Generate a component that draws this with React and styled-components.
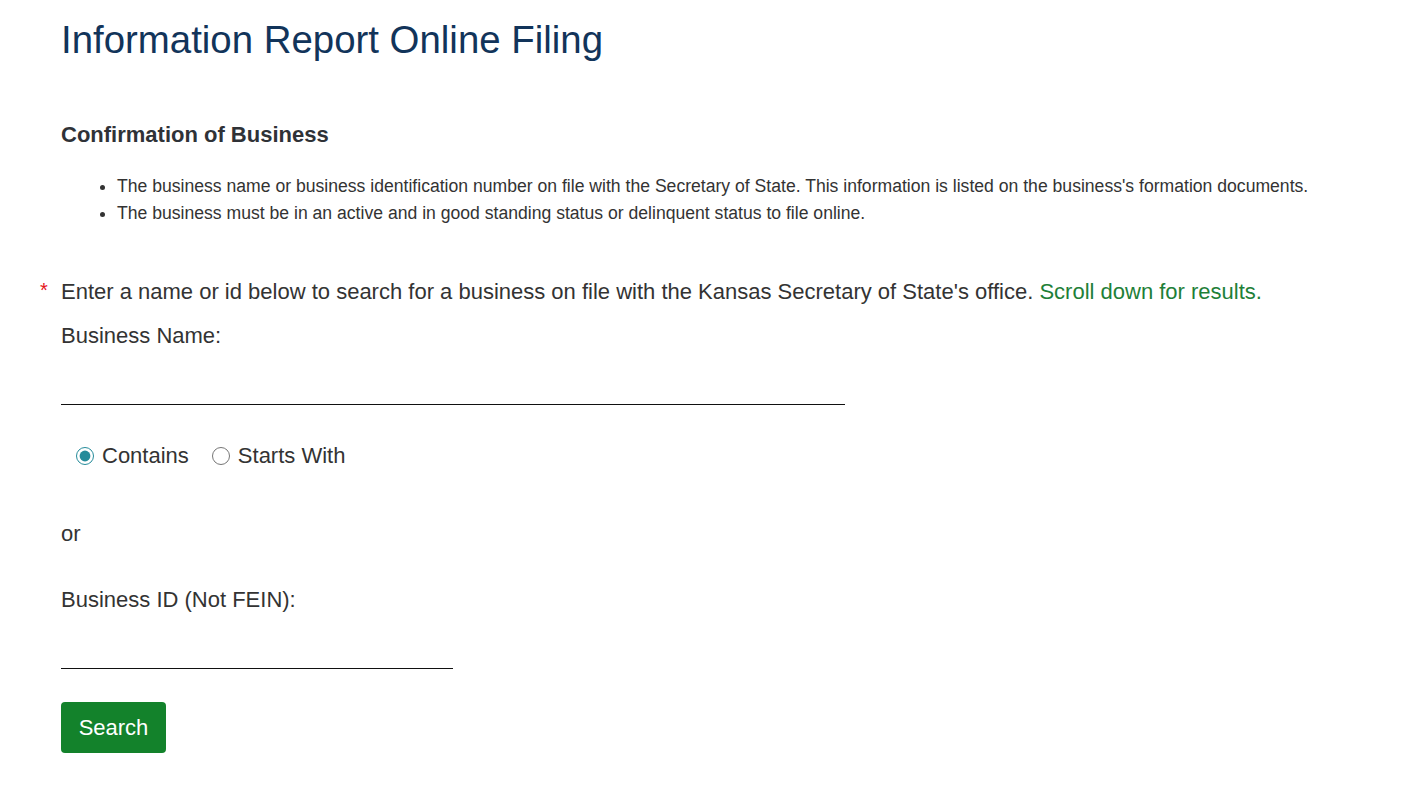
import React, { useState } from 'react';
import styled, { createGlobalStyle } from 'styled-components';

const GlobalStyle = createGlobalStyle`
	body {
		margin: 0;
		background: #fff;
		font-family: "Liberation Sans", Arial, sans-serif;
		color: #333;
	}
`;

const Page = styled.div`
	padding: 18px 0 30px 61px;
`;

const Title = styled.h1`
	margin: 0;
	font-size: 38.4px;
	font-weight: 400;
	line-height: 44px;
	color: #12345a;
`;

const SubTitle = styled.h2`
	margin: 61px 0 0;
	font-size: 22px;
	font-weight: 700;
	line-height: 24px;
	color: #2f3237;
`;

const Bullets = styled.ul`
	margin: 26px 0 0;
	padding-left: 56px;
	font-size: 17.6px;
	line-height: 27px;
	color: #333;
`;

const Prompt = styled.p`
	position: relative;
	margin: 51px 0 0;
	font-size: 22px;
	line-height: 28px;
	color: #333;
`;

const Required = styled.span`
	position: absolute;
	left: -21px;
	top: -2px;
	color: #e4141b;
	font-size: 20px;
`;

const Hint = styled.span`
	color: #1e8038;
`;

const Label = styled.label`
	display: block;
	margin-top: ${props => props.gap || 16}px;
	font-size: 22px;
	line-height: 28px;
	color: #333;
`;

const Input = styled.input`
	display: block;
	width: ${props => props.width}px;
	box-sizing: border-box;
	margin-top: 14px;
	border: none;
	border-bottom: 1px solid #111;
	padding: 4px 0;
	height: 41px;
	font-size: 22px;
	font-family: inherit;
	outline: none;
	background: transparent;
`;

const RadioRow = styled.div`
	display: flex;
	align-items: center;
	gap: 23px;
	margin-top: 37px;
	padding-left: 15px;
`;

const RadioOption = styled.label`
	display: flex;
	align-items: center;
	gap: 8px;
	font-size: 22px;
	line-height: 28px;
	color: #333;
	cursor: pointer;
`;

const Radio = styled.input`
	margin: 0;
	width: 18px;
	height: 18px;
	accent-color: #258b9a;
`;

const Or = styled.div`
	margin-top: 50px;
	font-size: 22px;
	line-height: 28px;
	color: #333;
`;

const Button = styled.button`
	display: block;
	margin-top: 33px;
	width: 105px;
	height: 51px;
	border: none;
	border-radius: 4px;
	background: #13822b;
	color: #fff;
	font-size: 22px;
	font-family: inherit;
	cursor: pointer;
`;

const App = () => {
	const [mode, setMode] = useState('contains');
	return (
		<>
			<GlobalStyle />
			<Page>
				<Title>Information Report Online Filing</Title>
				<SubTitle>Confirmation of Business</SubTitle>
				<Bullets>
					<li>The business name or business identification number on file with the Secretary of State. This information is listed on the business's formation documents.</li>
					<li>The business must be in an active and in good standing status or delinquent status to file online.</li>
				</Bullets>
				<Prompt>
					<Required>*</Required>
					Enter a name or id below to search for a business on file with the Kansas Secretary of State's office. <Hint>Scroll down for results.</Hint>
				</Prompt>
				<Label gap={16}>Business Name:</Label>
				<Input width={784} />
				<RadioRow>
					<RadioOption>
						<Radio type="radio" name="mode" checked={mode === 'contains'} onChange={() => setMode('contains')} />
						Contains
					</RadioOption>
					<RadioOption>
						<Radio type="radio" name="mode" checked={mode === 'starts'} onChange={() => setMode('starts')} />
						Starts With
					</RadioOption>
				</RadioRow>
				<Or>or</Or>
				<Label gap={38}>Business ID (Not FEIN):</Label>
				<Input width={392} />
				<Button>Search</Button>
			</Page>
		</>
	);
};

export default App;
